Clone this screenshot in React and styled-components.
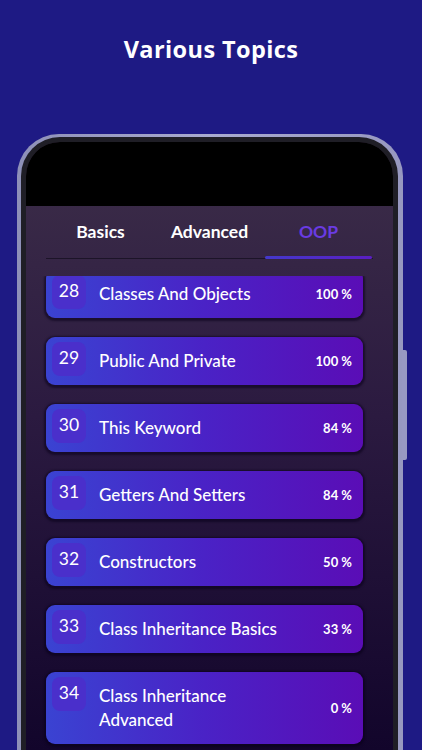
import React from 'react';
import styled, { createGlobalStyle } from 'styled-components';

const GlobalStyle = createGlobalStyle`
  html, body {
    margin: 0;
    padding: 0;
    background: #1e1a84;
    font-family: Lato, "Open Sans", sans-serif;
  }
`;

const Page = styled.div`
  width: 422px;
  height: 750px;
  overflow: hidden;
  background: #1e1a84;
  display: flex;
  flex-direction: column;
  align-items: center;
`;

const Title = styled.h1`
  margin: 33px 0 0;
  height: 32px;
  color: #ffffff;
  font-family: "Open Sans", sans-serif;
  font-weight: 700;
  font-size: 23.5px;
  letter-spacing: 0.4px;
  line-height: 32px;
`;

const Phone = styled.div`
  position: relative;
  margin-top: 69px;
  margin-right: 2px;
  width: 386px;
  flex: 1;
  box-sizing: border-box;
  padding: 3px 5px 0 4px;
  border-radius: 42px 42px 0 0;
  background: linear-gradient(90deg, #8e90b8, #a9abd0 50%, #9798c0);
`;

const SideButton = styled.div`
  position: absolute;
  right: -4px;
  top: 216px;
  width: 5px;
  height: 110px;
  border-radius: 0 2px 2px 0;
  background: #9899c2;
`;

const Bezel = styled.div`
  height: 100%;
  box-sizing: border-box;
  padding: 5px 5px 0 5px;
  border-radius: 39px 39px 0 0;
  background: #1f1e26;
`;

const Screen = styled.div`
  height: 100%;
  border-radius: 34px 34px 0 0;
  overflow: hidden;
  display: flex;
  flex-direction: column;
  background: linear-gradient(180deg, #3d2e49 0%, #2b1a40 45%, #12052b 100%);
`;

const Notch = styled.div`
  height: 64px;
  flex-shrink: 0;
  background: #000000;
`;

const Tabs = styled.div`
  margin: 0 20px;
  display: grid;
  grid-template-columns: repeat(3, 1fr);
  border-bottom: 1px solid #1c1428;
`;

const Tab = styled.div`
  position: relative;
  height: 52px;
  display: flex;
  align-items: center;
  justify-content: center;
  padding-bottom: 1px;
  box-sizing: border-box;
  font-family: Lato, sans-serif;
  font-weight: 700;
  font-size: 17.5px;
  color: ${(p) => (p.$active ? '#6a3be2' : '#ffffff')};

  &::after {
    content: '';
    display: ${(p) => (p.$active ? 'block' : 'none')};
    position: absolute;
    left: 1px;
    right: 1px;
    bottom: -1px;
    height: 3px;
    border-radius: 2px;
    background: linear-gradient(90deg, #4438cc, #5a1ec2);
  }
`;

const ListViewport = styled.div`
  margin-top: 17px;
  flex: 1;
  overflow: hidden;
`;

const List = styled.div`
  margin-top: -6px;
  padding: 0 30px 0 20px;
  display: flex;
  flex-direction: column;
  gap: 19px;
`;

const Card = styled.div`
  display: flex;
  align-items: center;
  min-height: 48px;
  box-sizing: border-box;
  padding: 5px 11px 5px 6px;
  border-radius: 9px;
  background: linear-gradient(90deg, #3a43d2 0%, #4a22c6 50%, #5a0db6 100%);
  box-shadow: 0 1px 2px 2px rgba(10, 2, 25, 0.55);
`;

const Num = styled.div`
  align-self: flex-start;
  flex-shrink: 0;
  width: 34px;
  height: 34px;
  border-radius: 8px;
  background: #4a2fcb;
  display: flex;
  align-items: center;
  justify-content: center;
  padding-bottom: 3px;
  box-sizing: border-box;
  color: #ffffff;
  font-family: Lato, sans-serif;
  font-size: 17.5px;
`;

const Name = styled.div`
  flex: 1;
  margin-left: 13px;
  padding: 7px 0;
  line-height: 24px;
  color: #ffffff;
  font-family: Lato, sans-serif;
  font-weight: 500;
  font-size: 17px;
`;

const Percent = styled.div`
  flex-shrink: 0;
  margin-left: 8px;
  color: #ffffff;
  font-family: Lato, sans-serif;
  font-weight: 700;
  font-size: 13px;
`;

const topics = [
  { n: 28, name: 'Classes And Objects', pct: 100 },
  { n: 29, name: 'Public And Private', pct: 100 },
  { n: 30, name: 'This Keyword', pct: 84 },
  { n: 31, name: 'Getters And Setters', pct: 84 },
  { n: 32, name: 'Constructors', pct: 50 },
  { n: 33, name: 'Class Inheritance Basics', pct: 33 },
  { n: 34, name: ['Class Inheritance', 'Advanced'], pct: 0 },
];

const App = () => {
  return (
    <Page>
      <GlobalStyle />
      <Title>Various Topics</Title>
      <Phone>
        <SideButton />
        <Bezel>
          <Screen>
            <Notch />
            <Tabs>
              <Tab>Basics</Tab>
              <Tab>Advanced</Tab>
              <Tab $active>OOP</Tab>
            </Tabs>
            <ListViewport>
              <List>
                {topics.map((t) => (
                  <Card key={t.n}>
                    <Num>{t.n}</Num>
                    <Name>
                      {Array.isArray(t.name)
                        ? t.name.map((line, i) => <div key={i}>{line}</div>)
                        : t.name}
                    </Name>
                    <Percent>{t.pct} %</Percent>
                  </Card>
                ))}
              </List>
            </ListViewport>
          </Screen>
        </Bezel>
      </Phone>
    </Page>
  );
};

export default App;
